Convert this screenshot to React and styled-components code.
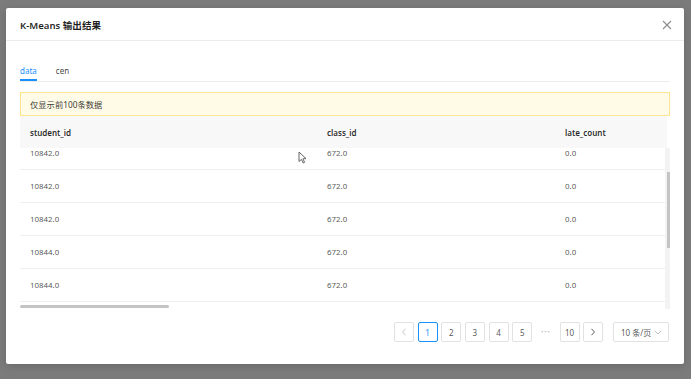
import React from "react";
import styled, { createGlobalStyle } from "styled-components";

const GlobalStyle = createGlobalStyle`
  html, body {
    margin: 0;
    padding: 0;
    width: 691px;
    height: 379px;
    overflow: hidden;
    background: #7b7b7b;
    font-family: "Noto Sans", "Noto Sans CJK SC", sans-serif;
  }
`;

const columns = [
  { key: "student_id", width: 297 },
  { key: "class_id", width: 238 },
  { key: "late_count", width: 260 },
];

const rows = [
  ["10842.0", "672.0", "0.0"],
  ["10842.0", "672.0", "0.0"],
  ["10842.0", "672.0", "0.0"],
  ["10844.0", "672.0", "0.0"],
  ["10844.0", "672.0", "0.0"],
];

export default function App() {
  return (
    <Page>
      <GlobalStyle />
      <Modal>
        <Header>
          <Title>K-Means 输出结果</Title>
          <Close>
            <svg width="10" height="10" viewBox="0 0 10 10">
              <path d="M1 1L9 9M9 1L1 9" stroke="#8c8c8c" strokeWidth="1.1" />
            </svg>
          </Close>
        </Header>
        <Body>
          <Tabs>
            <Tab active>data</Tab>
            <Tab>cen</Tab>
          </Tabs>
          <Alert>仅显示前100条数据</Alert>
          <TableWrap>
            <HeadRow>
              {columns.map((c) => (
                <HeadCell key={c.key} w={c.width}>
                  {c.key}
                </HeadCell>
              ))}
            </HeadRow>
            <Viewport>
              <Scroller>
                {rows.map((r, i) => (
                  <Row key={i}>
                    {r.map((v, j) => (
                      <Cell key={j} w={columns[j].width}>
                        {v}
                      </Cell>
                    ))}
                  </Row>
                ))}
              </Scroller>
              <HThumb />
            </Viewport>
            <VTrack>
              <VThumb />
            </VTrack>
            <Cursor>
              <svg width="9" height="13" viewBox="0 0 9 13">
                <path
                  d="M1 1L1 10.5L3.4 8.4L5.2 12L6.6 11.3L4.9 7.8L8 7.6Z"
                  fill="#fff"
                  stroke="#555"
                  strokeWidth="0.9"
                  strokeLinejoin="round"
                />
              </svg>
            </Cursor>
          </TableWrap>
          <Pager>
            <PageItem disabled>
              <svg width="6" height="8" viewBox="0 0 6 8">
                <path d="M4.5 0.8L1.5 4L4.5 7.2" fill="none" stroke="#c4c4c4" strokeWidth="1" />
              </svg>
            </PageItem>
            <PageItem active>1</PageItem>
            <PageItem>2</PageItem>
            <PageItem>3</PageItem>
            <PageItem>4</PageItem>
            <PageItem>5</PageItem>
            <Ellipsis>•••</Ellipsis>
            <PageItem>10</PageItem>
            <PageItem>
              <svg width="6" height="8" viewBox="0 0 6 8">
                <path d="M1.5 0.8L4.5 4L1.5 7.2" fill="none" stroke="#595959" strokeWidth="1" />
              </svg>
            </PageItem>
            <SizeChanger>
              <span>10 条/页</span>
              <svg width="8" height="5" viewBox="0 0 8 5">
                <path d="M0.8 0.8L4 4L7.2 0.8" fill="none" stroke="#bfbfbf" strokeWidth="1" />
              </svg>
            </SizeChanger>
          </Pager>
        </Body>
      </Modal>
    </Page>
  );
}

const Page = styled.div`
  width: 691px;
  height: 379px;
  box-sizing: border-box;
  padding: 8px 7px 15px 6px;
`;

const Modal = styled.div`
  width: 678px;
  height: 356px;
  background: #fff;
  border-radius: 2px;
  box-shadow: 0 2px 8px rgba(0, 0, 0, 0.15);
  display: flex;
  flex-direction: column;
`;

const Header = styled.div`
  height: 32px;
  border-bottom: 1px solid #ececec;
  display: flex;
  align-items: center;
  justify-content: space-between;
  padding: 0 12px 0 14px;
`;

const Title = styled.div`
  font-size: 9.6px;
  font-weight: 600;
  color: rgba(0, 0, 0, 0.88);
  margin-top: 1px;
`;

const Close = styled.div`
  display: flex;
  align-items: center;
  margin-top: 1px;
`;

const Body = styled.div`
  padding: 17px 14px 0 14px;
  display: flex;
  flex-direction: column;
`;

const Tabs = styled.div`
  height: 23px;
  border-bottom: 1px solid #ececec;
  display: flex;
  gap: 19px;
`;

const Tab = styled.div`
  font-size: 8px;
  height: 23px;
  box-sizing: border-box;
  padding-top: 7px;
  color: ${(p) => (p.active ? "#1890ff" : "rgba(0,0,0,0.78)")};
  border-bottom: 2px solid ${(p) => (p.active ? "#1890ff" : "transparent")};
  margin-bottom: -1px;
`;

const Alert = styled.div`
  margin-top: 10px;
  height: 24px;
  box-sizing: border-box;
  background: #fffbe6;
  border: 1px solid #ffe58f;
  display: flex;
  align-items: center;
  padding-left: 9px;
  font-size: 8.3px;
  color: rgba(0, 0, 0, 0.8);
`;

const TableWrap = styled.div`
  position: relative;
  overflow: hidden;
`;

const HeadRow = styled.div`
  height: 32px;
  background: #f8f8f8;
  display: flex;
  align-items: center;
  margin-right: 3px;
`;

const HeadCell = styled.div`
  flex: 0 0 ${(p) => p.w}px;
  box-sizing: border-box;
  padding-left: 10px;
  font-size: 8px;
  font-weight: 600;
  color: rgba(0, 0, 0, 0.85);
`;

const Viewport = styled.div`
  height: 161px;
  overflow: hidden;
  position: relative;
`;

const Scroller = styled.div`
  margin-top: -11px;
`;

const Row = styled.div`
  height: 32px;
  border-bottom: 1px solid #eeeeee;
  display: flex;
  align-items: center;
`;

const Cell = styled.div`
  flex: 0 0 ${(p) => p.w}px;
  box-sizing: border-box;
  padding-left: 10px;
  font-size: 7.9px;
  color: rgba(0, 0, 0, 0.7);
`;

const HThumb = styled.div`
  position: absolute;
  left: 0;
  bottom: 1px;
  width: 149px;
  height: 3px;
  border-radius: 2px;
  background: #c4c4c4;
`;

const VTrack = styled.div`
  position: absolute;
  right: 0;
  top: 32px;
  width: 5px;
  height: 161px;
  background: #f3f3f3;
`;

const VThumb = styled.div`
  margin: 24px 0 0 2px;
  width: 3px;
  height: 76px;
  background: #c4c4c4;
`;

const Cursor = styled.div`
  position: absolute;
  left: 278px;
  top: 35px;
  line-height: 0;
`;

const Pager = styled.div`
  margin-top: 13px;
  display: flex;
  justify-content: flex-end;
  align-items: center;
  gap: 3.7px;
  padding-right: 1px;
`;

const PageItem = styled.div`
  width: 20px;
  height: 20px;
  box-sizing: border-box;
  border: 1px solid ${(p) => (p.active ? "#1890ff" : "#e2e2e2")};
  border-radius: 2px;
  display: flex;
  align-items: center;
  justify-content: center;
  font-size: 8px;
  color: ${(p) => (p.active ? "#1890ff" : "rgba(0,0,0,0.7)")};
`;

const Ellipsis = styled.div`
  width: 20px;
  text-align: center;
  font-size: 6px;
  letter-spacing: 1px;
  color: #b5b5b5;
`;

const SizeChanger = styled.div`
  margin-left: 6px;
  width: 56px;
  height: 20px;
  box-sizing: border-box;
  border: 1px solid #e2e2e2;
  border-radius: 2px;
  display: flex;
  align-items: center;
  justify-content: space-between;
  padding: 0 6px 0 7px;
  font-size: 8px;
  white-space: nowrap;
  color: rgba(0, 0, 0, 0.7);
`;
